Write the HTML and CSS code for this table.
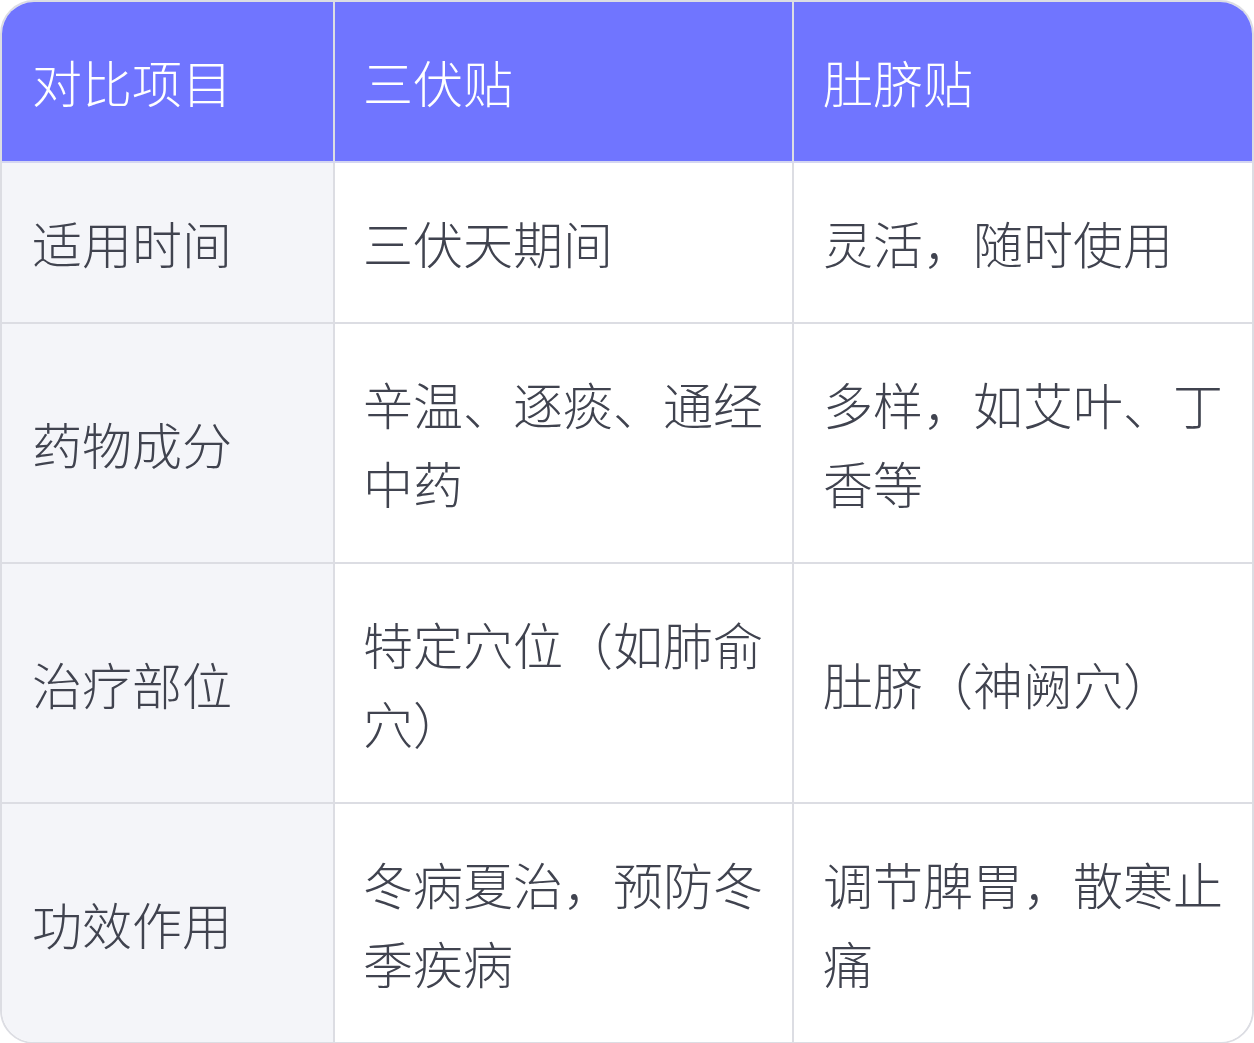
FILE: index.html
```html
<!DOCTYPE html>
<html lang="zh-CN">
<head>
<meta charset="utf-8">
<title>三伏贴与肚脐贴对比</title>
<link rel="stylesheet" href="styles.css">
</head>
<body>
<div class="card">
  <div class="grid">
    <div class="cell head first">对比项目</div>
    <div class="cell head">三伏贴</div>
    <div class="cell head last">肚脐贴</div>

    <div class="cell label first">适用时间</div>
    <div class="cell">三伏天期间</div>
    <div class="cell last">灵活，随时使用</div>

    <div class="cell label first">药物成分</div>
    <div class="cell">辛温、逐痰、通经中药</div>
    <div class="cell last">多样，如艾叶、丁香等</div>

    <div class="cell label first">治疗部位</div>
    <div class="cell">特定穴位（如肺俞穴）</div>
    <div class="cell last">肚脐（神阙穴）</div>

    <div class="cell label first bottom">功效作用</div>
    <div class="cell bottom">冬病夏治，预防冬季疾病</div>
    <div class="cell last bottom">调节脾胃，散寒止痛</div>
  </div>
</div>
</body>
</html>
```

FILE: styles.css
```css
html, body {
  margin: 0;
  padding: 0;
  background: #ffffff;
}

.card {
  width: 1254px;
  box-sizing: border-box;
  border: 2px solid #dcdde3;
  border-radius: 34px;
  overflow: hidden;
  background: #ffffff;
}

.grid {
  display: grid;
  grid-template-columns: 333px 459px 1fr;
  font-family: "Noto Sans CJK SC", "Noto Sans", sans-serif;
  font-size: 50px;
  font-weight: 300;
  line-height: 79px;
  color: #40434f;
}

.cell {
  box-sizing: border-box;
  display: flex;
  align-items: center;
  padding: 40px 28px;
  border-right: 2px solid #dcdde3;
  border-bottom: 2px solid #dcdde3;
  background: #ffffff;
  min-width: 0;
}

.cell.first {
  padding-left: 30px;
}

.cell.last {
  padding-left: 29px;
  padding-right: 27px;
  border-right: none;
}

.cell.bottom {
  border-bottom: none;
}

.cell.head {
  background: #7075ff;
  color: #ffffff;
  border-bottom-color: #d4d6f2;
}

.cell.label {
  background: #f4f5f9;
}
```
